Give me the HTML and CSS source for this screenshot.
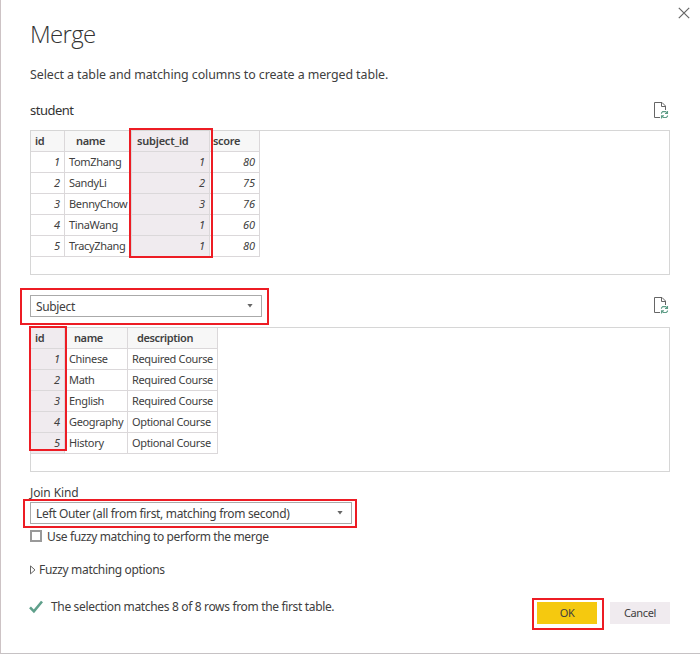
FILE: index.html
```html
<!DOCTYPE html>
<html lang="en">
<head>
<meta charset="utf-8">
<title>Merge</title>
<link rel="stylesheet" href="styles.css">
</head>
<body>
<svg class="defs" width="0" height="0" aria-hidden="true">
  <symbol id="refresh-file" viewBox="0 0 16 18">
    <path d="M6 15.5H.5V.5H8L11.5 4v4M7.5.5v4h4" fill="none" stroke="#666" />
    <path d="M7.5 11.8V11l1.2-1.4h3l1.3 1.2M13.5 9v2.5H11M13.5 13.4v.8l-1.2 1.3h-3L8 14.3M7.5 16.4v-2.6H10" fill="none" stroke="#5c9c85" stroke-width="1.1" />
  </symbol>
</svg>
<main class="dialog">
  <button class="close" aria-label="Close"><svg width="12" height="12" viewBox="0 0 12 12"><path d="M.8.8l10.4 10.4M11.2.8L.8 11.2" stroke="#666" stroke-width="1.2"/></svg></button>
  <h1><span>Merge</span></h1>
  <p class="intro">Select a table and matching columns to create a merged table.</p>

  <div class="source source-first">
    <span class="source-name">student</span>
    <svg class="file-icon" width="16" height="18"><use href="#refresh-file"/></svg>
  </div>
  <section class="preview">
    <table class="first">
      <colgroup><col class="w-id"><col class="w-name"><col class="w-subject"><col class="w-score"></colgroup>
      <tr><th>id</th><th class="pad">name</th><th class="sel subject-head">subject_id</th><th class="score-head">score</th></tr>
      <tr><td class="num">1</td><td>TomZhang</td><td class="num sel">1</td><td class="num">80</td></tr>
      <tr><td class="num">2</td><td>SandyLi</td><td class="num sel">2</td><td class="num">75</td></tr>
      <tr><td class="num">3</td><td>BennyChow</td><td class="num sel">3</td><td class="num">76</td></tr>
      <tr><td class="num">4</td><td>TinaWang</td><td class="num sel">1</td><td class="num">60</td></tr>
      <tr><td class="num">5</td><td>TracyZhang</td><td class="num sel">1</td><td class="num">80</td></tr>
    </table>
    <i class="mark mark-subject"></i>
  </section>

  <div class="source source-second">
    <div class="select select-table"><span>Subject</span><i class="caret"></i><i class="mark mark-table"></i></div>
    <svg class="file-icon" width="16" height="18"><use href="#refresh-file"/></svg>
  </div>
  <section class="preview">
    <table class="second">
      <colgroup><col class="w-id"><col class="w-name2"><col class="w-desc"></colgroup>
      <tr><th class="sel">id</th><th class="pad2">name</th><th class="pad2">description</th></tr>
      <tr><td class="num sel">1</td><td>Chinese</td><td>Required Course</td></tr>
      <tr><td class="num sel">2</td><td>Math</td><td>Required Course</td></tr>
      <tr><td class="num sel">3</td><td>English</td><td>Required Course</td></tr>
      <tr><td class="num sel">4</td><td>Geography</td><td>Optional Course</td></tr>
      <tr><td class="num sel">5</td><td>History</td><td>Optional Course</td></tr>
    </table>
    <i class="mark mark-id"></i>
  </section>

  <div class="join-label">Join Kind</div>
  <div class="select select-join"><span>Left Outer (all from first, matching from second)</span><i class="caret"></i><i class="mark mark-join"></i></div>
  <label class="fuzzy"><i class="box"></i><span>Use fuzzy matching to perform the merge</span></label>
  <div class="options"><svg width="6" height="10" viewBox="0 0 6 10"><path d="M.5.9v8L5 4.9z" fill="none" stroke="#666"/></svg><span>Fuzzy matching options</span></div>
  <footer>
    <div class="status"><svg width="14" height="14" viewBox="0 0 14 14"><path d="M1 7.3l3.9 4L13 1.5" fill="none" stroke="#5fa08b" stroke-width="2.6"/></svg><span>The selection matches 8 of 8 rows from the first table.</span></div>
    <div class="buttons">
      <button class="btn ok"><span>OK</span><i class="mark mark-ok"></i></button>
      <button class="btn cancel"><span>Cancel</span></button>
    </div>
  </footer>
</main>
</body>
</html>
```
FILE: styles.css
```css
* { box-sizing: border-box; }
body { margin: 0; background: #fff; }
.defs { position: absolute; }
.dialog {
  position: relative;
  width: 700px;
  height: 654px;
  padding: 19px 30px 0 29px;
  border-left: 1px solid #cdc3c5;
  border-bottom: 1px solid #c6c2c4;
  font: 12px/16px "Noto Sans", "Open Sans", sans-serif;
  letter-spacing: -.34px;
  color: #404040;
  overflow: hidden;
  white-space: nowrap;
}
button { font: inherit; letter-spacing: inherit; color: inherit; border: 0; padding: 0; }
.close { position: absolute; top: 7px; right: 10px; width: 12px; height: 12px; background: none; }
.close svg { display: block; }
h1 { margin: 0; height: 46px; font: 300 24px/30px "Open Sans", sans-serif; letter-spacing: -.65px; color: #333; }
.intro { margin: 0; height: 36px; line-height: 19px; font-size: 12.4px; letter-spacing: -.08px; }
.source { display: flex; justify-content: space-between; align-items: flex-start; }
.source-first { height: 29px; }
.source-name { font-size: 13px; line-height: 19px; letter-spacing: -.5px; color: #333; }
.file-icon { margin-top: 1px; }
.source-second { height: 52px; padding-top: 20px; }
.source-second .file-icon { margin-top: 2px; }
.preview { position: relative; height: 145px; border: 1px solid #d6d6d6; }
table { table-layout: fixed; border-collapse: separate; border-spacing: 0; font-size: 11px; }
.first { width: 229px; }
.second { width: 187px; }
.w-id { width: 34px; }
.w-name { width: 67px; }
.w-subject { width: 78px; }
.w-score { width: 50px; }
.w-name2 { width: 63px; }
.w-desc { width: 90px; }
td, th { height: 21px; padding: 0 4px; line-height: 20px; border: solid #dbd8da; border-width: 0 1px 1px 0; text-align: left; }
th { background: #f7f7f7; font-weight: 600; }
th.pad { padding-left: 11px; }
th.pad2 { padding-left: 9px; letter-spacing: -.4px; }
th { letter-spacing: -.35px; }
th.subject-head { padding-left: 5px; letter-spacing: -.2px; }
th.score-head { padding-left: 3px; }
.num { text-align: right; font-style: italic; letter-spacing: 0; }
.sel { background: #f0ebef; }
.mark { position: absolute; border: 2px solid #ed1c24; }
.mark-subject { left: 98px; top: -3px; width: 84px; height: 130px; }
.mark-id { left: -2px; top: -2px; width: 38px; height: 125px; }
.mark-table { left: -11px; top: -8px; width: 249px; height: 37px; }
.mark-join { left: -8px; top: -4px; width: 334px; height: 29px; }
.mark-ok { left: -5px; top: -4px; width: 72px; height: 32px; }
.select { position: relative; display: flex; align-items: center; justify-content: space-between; height: 22px; padding: 1px 8px 0 5px; border: 1px solid #aaa; }
.select-table { width: 232px; }
.select-join { width: 322px; }
.caret { width: 6px; height: 4px; margin-top: -2px; background: #666; clip-path: polygon(0 0, 100% 0, 50% 100%); }
.join-label { margin-top: 12px; height: 18px; line-height: 18px; letter-spacing: -.1px; }
.fuzzy { display: flex; align-items: center; height: 24px; gap: 5px; }
.fuzzy span { position: relative; top: 1px; letter-spacing: -.37px; }
.box { width: 12px; height: 12px; border: 2px solid #999; }
.options { display: flex; align-items: center; gap: 3px; margin-top: 12px; height: 20px; }
footer { display: flex; justify-content: space-between; margin-top: 22px; }
.status { display: flex; align-items: center; gap: 8px; height: 10px; margin-left: -1px; }
.buttons { display: flex; gap: 13px; }
.btn { position: relative; width: 60px; height: 22px; font-size: 11px; }
.ok { background: #f5c90f; }
.cancel { background: #f0ebef; }
```
